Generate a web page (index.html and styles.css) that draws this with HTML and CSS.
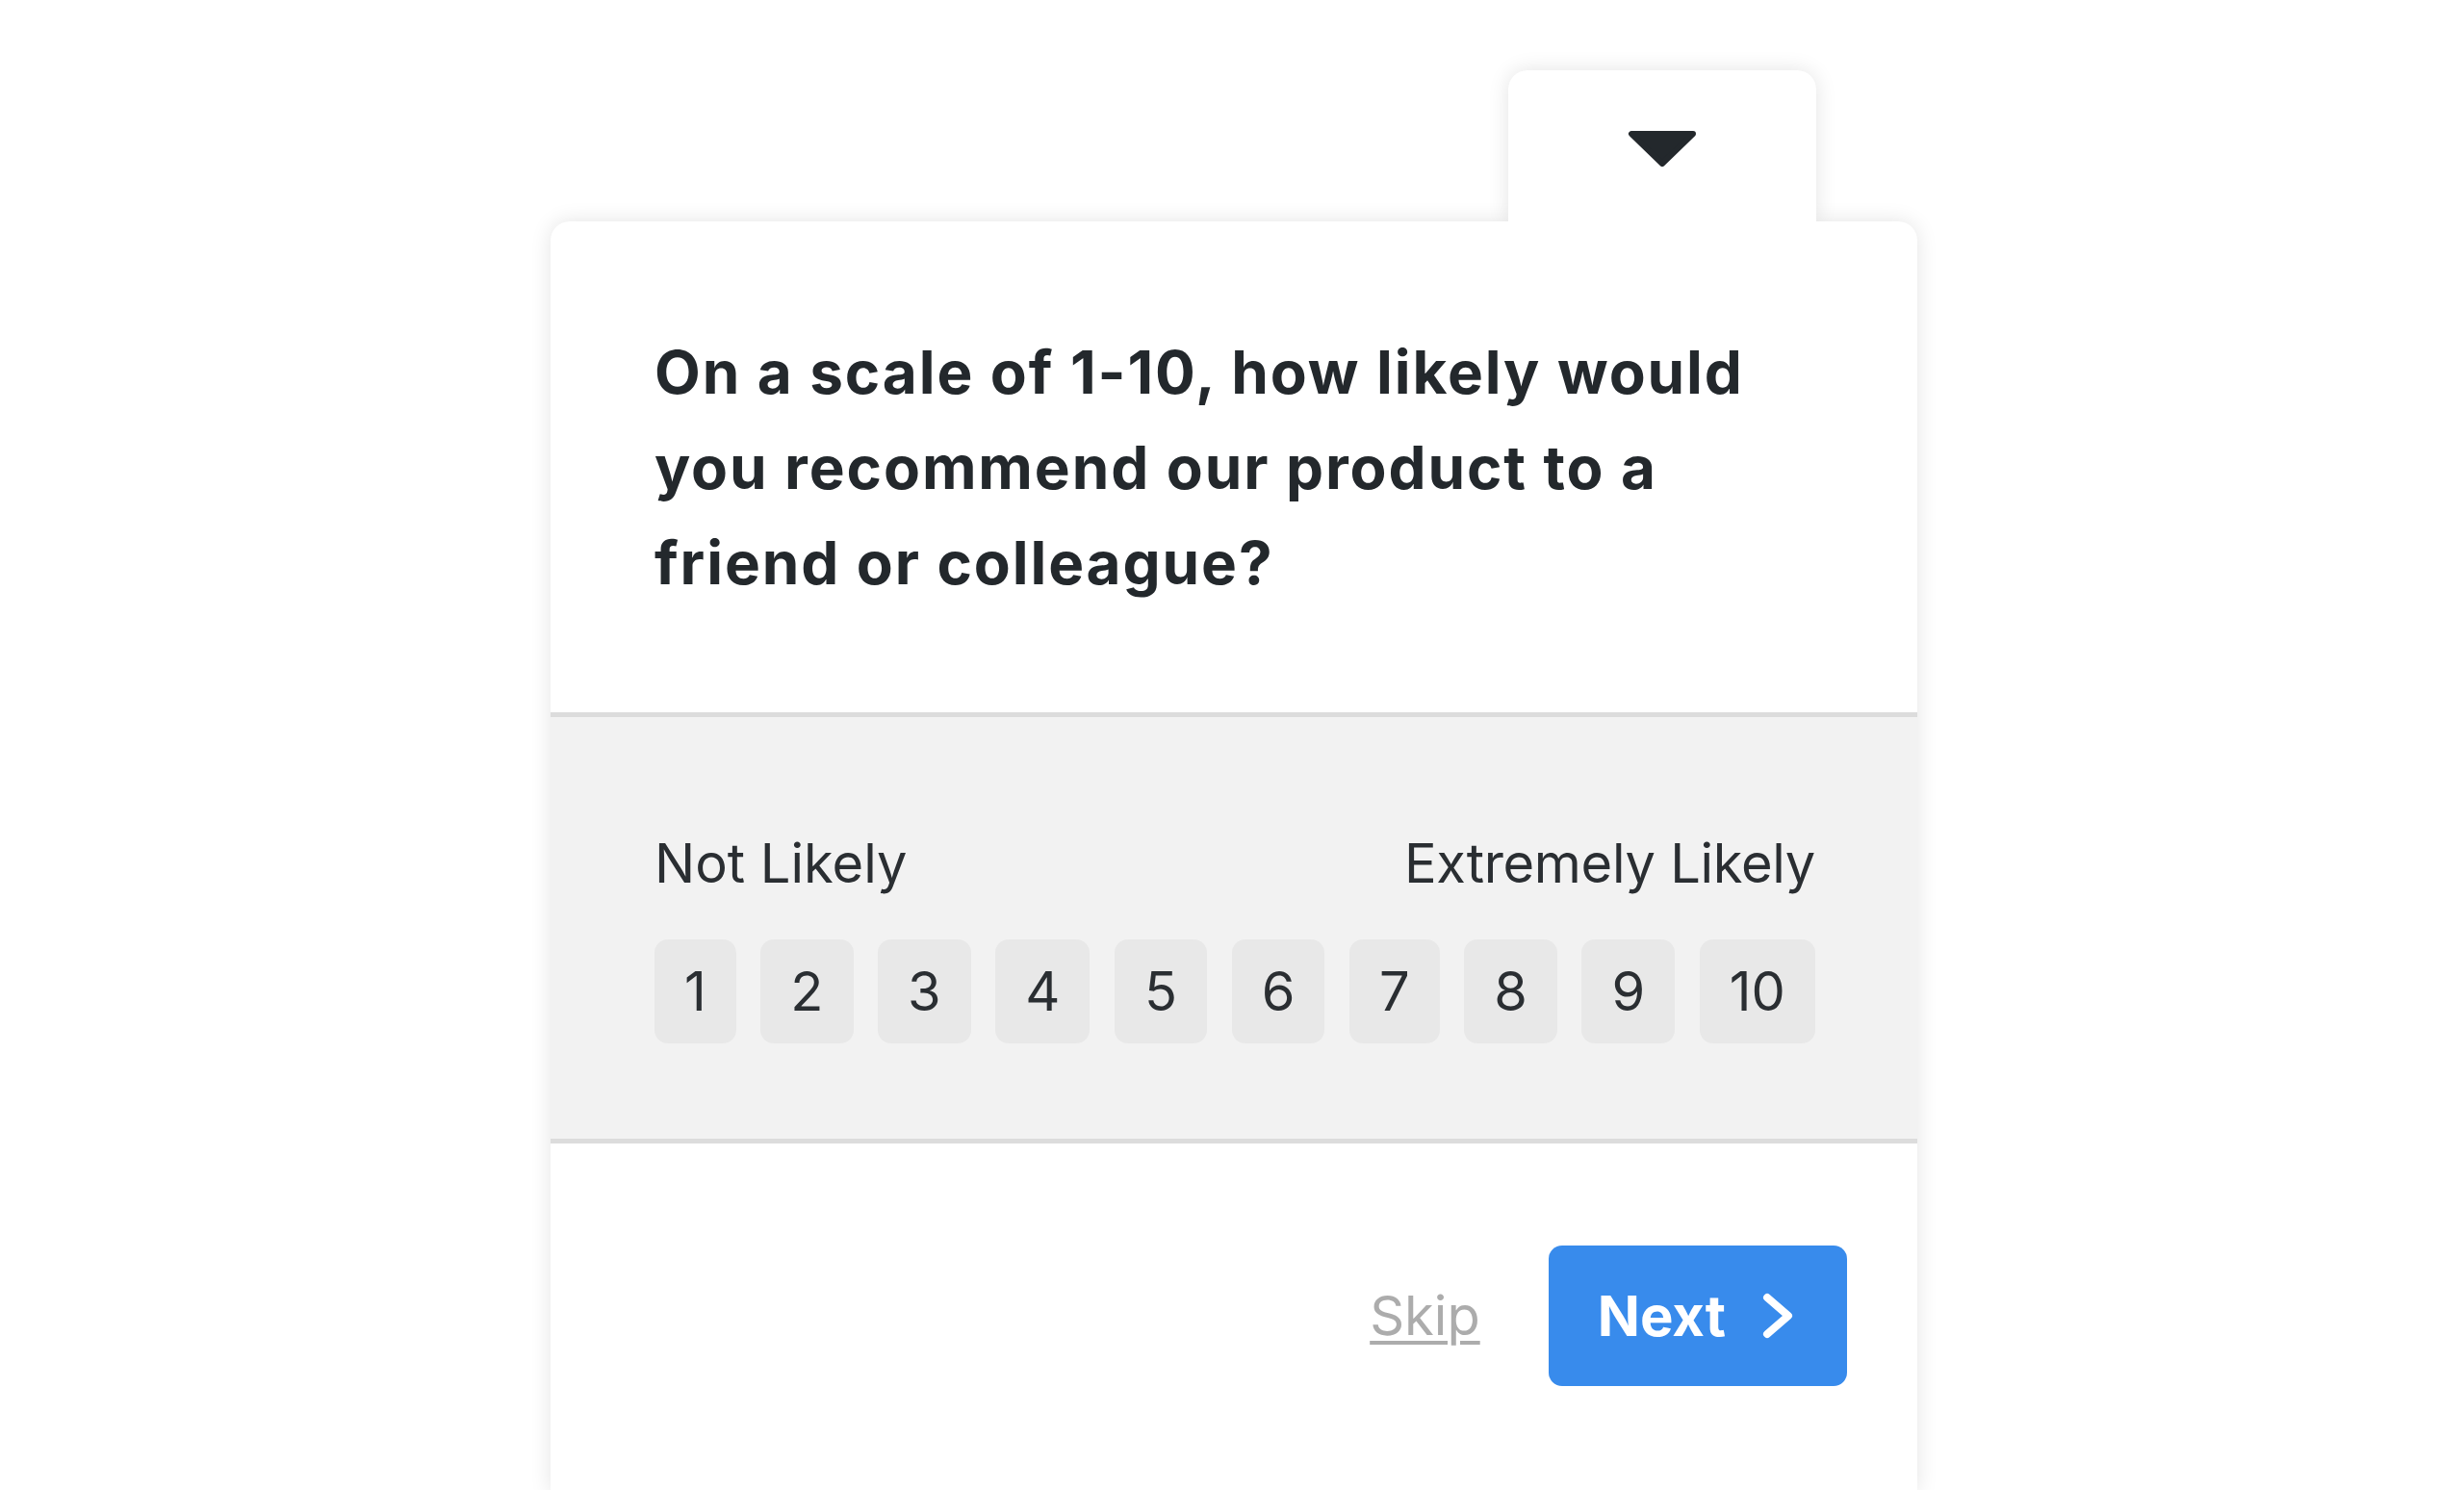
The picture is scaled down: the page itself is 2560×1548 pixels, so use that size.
FILE: index.html
```html
<!DOCTYPE html>
<html lang="en">
<head>
<meta charset="utf-8">
<title>Survey</title>
<link rel="stylesheet" href="styles.css">
</head>
<body>
<main class="survey">
  <div class="survey-tab">
    <svg class="tab-caret" width="72" height="40" viewBox="0 0 72 40" aria-hidden="true">
      <polygon points="4,4 68,4 36,35" fill="#23282c" stroke="#23282c" stroke-width="6" stroke-linejoin="round"/>
    </svg>
  </div>
  <section class="question">
    <h1 class="question-text">On a scale of 1-10, how likely would you recommend our product to a friend or colleague?</h1>
  </section>
  <section class="scale">
    <div class="scale-labels">
      <span>Not Likely</span>
      <span>Extremely Likely</span>
    </div>
    <div class="scale-options">
      <button class="option">1</button>
      <button class="option">2</button>
      <button class="option">3</button>
      <button class="option">4</button>
      <button class="option">5</button>
      <button class="option">6</button>
      <button class="option">7</button>
      <button class="option">8</button>
      <button class="option">9</button>
      <button class="option">10</button>
    </div>
  </section>
  <footer class="actions">
    <a class="skip" href="#">Skip</a>
    <button class="next">
      <span>Next</span>
      <svg class="next-chevron" width="32" height="48" viewBox="0 0 32 48" aria-hidden="true">
        <polyline points="5,5 27,24 5,43" fill="none" stroke="#ffffff" stroke-width="8" stroke-linecap="round" stroke-linejoin="round"/>
      </svg>
    </button>
  </footer>
</main>
</body>
</html>
```

FILE: styles.css
```css
* {
  box-sizing: border-box;
}

html, body {
  margin: 0;
  padding: 0;
  background: #ffffff;
}

body {
  font-family: "Inter", "Liberation Sans", sans-serif;
  color: #24282c;
  overflow: hidden;
}

.survey {
  position: relative;
  width: 1420px;
  margin: 230px 0 0 572px;
  background: #ffffff;
  border-radius: 20px 20px 0 0;
  box-shadow: 0 0 22px rgba(0, 0, 0, 0.11);
}

.survey-tab {
  position: absolute;
  bottom: 100%;
  right: 105px;
  width: 320px;
  height: 157px;
  background: #ffffff;
  border-radius: 20px 20px 0 0;
  box-shadow: 0 0 22px rgba(0, 0, 0, 0.11);
  clip-path: inset(-40px -40px 0 -40px);
  display: flex;
  justify-content: center;
  padding-top: 62px;
  z-index: 2;
}

.tab-caret {
  display: block;
}

.question {
  padding: 107px 108px 106px;
}

.question-text {
  margin: 0;
  font-size: 62px;
  line-height: 99px;
  font-weight: 700;
  letter-spacing: 1.9px;
  color: #23282c;
}

.scale {
  background: #f2f2f2;
  border-top: 5px solid #dcdcdc;
  border-bottom: 5px solid #dcdcdc;
  padding: 118px 106px 99px 108px;
}

.scale-labels {
  display: flex;
  justify-content: space-between;
  font-size: 56px;
  line-height: 68px;
  color: #2a2e32;
  margin-bottom: 45px;
}

.scale-labels span:last-child {
  letter-spacing: -0.3px;
}

.scale-options {
  display: flex;
  justify-content: space-between;
}

.option {
  height: 108px;
  padding: 0 31px;
  border: none;
  border-radius: 14px;
  background: #e8e8e8;
  font-family: inherit;
  font-size: 56px;
  color: #2a2e32;
  display: flex;
  align-items: center;
  justify-content: center;
}

.actions {
  display: flex;
  justify-content: flex-end;
  align-items: center;
  gap: 71px;
  padding: 106px 73px 111px 108px;
}

.skip {
  font-size: 56px;
  color: #acacac;
  text-decoration: underline;
  text-decoration-thickness: 4px;
  text-underline-offset: 6px;
}

.next {
  height: 146px;
  padding: 0 56px 0 51px;
  border: none;
  border-radius: 14px;
  background: #388bec;
  color: #ffffff;
  font-family: inherit;
  font-size: 58px;
  font-weight: 700;
  display: flex;
  align-items: center;
  gap: 38px;
}

.next-chevron {
  display: block;
}
```
